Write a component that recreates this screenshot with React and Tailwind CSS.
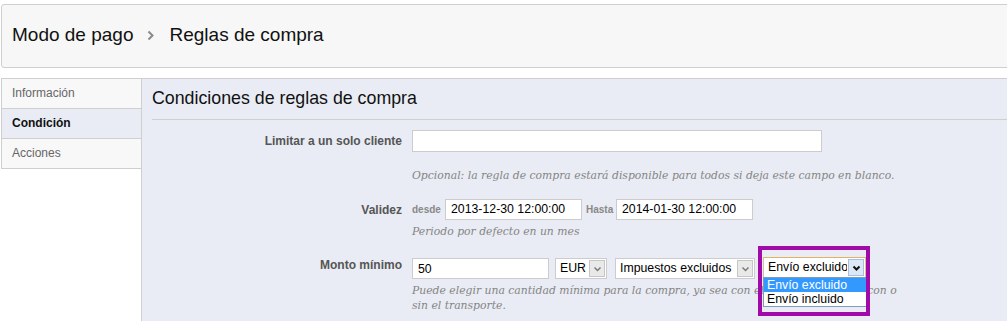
import React from "react";

const sans = { fontFamily: '"Liberation Sans", Arial, sans-serif' };
const serif = { fontFamily: '"DejaVu Serif", Georgia, serif' };

function Chevron({ color = "#777", bold = false }) {
  return (
    <svg width="9" height="6" viewBox="0 0 9 6">
      <polyline
        points="1.5,1.5 4.5,4.5 7.5,1.5"
        fill="none"
        stroke={color}
        strokeWidth={bold ? 2 : 1.5}
      />
    </svg>
  );
}

function Select({ text, width, focused = false }) {
  return (
    <div
      className={
        "relative flex h-[21px] items-stretch bg-white border " +
        (focused ? "border-[#d9c29a] border-t-[#e2b260]" : "border-[#cccccc]")
      }
      style={{ width }}
    >
      <div className="flex min-w-0 flex-1 items-center overflow-hidden whitespace-nowrap pl-[4px] text-[12.3px] text-black">
        {text}
      </div>
      <div
        className={
          "m-[1px] flex w-[16px] shrink-0 items-center justify-center border " +
          (focused ? "border-[#a9c0dc] bg-[#dde8f6]" : "border-[#c6c6c6] bg-[#e9e9e9]")
        }
      >
        <Chevron color={focused ? "#111" : "#7a7a7a"} bold={focused} />
      </div>
    </div>
  );
}

export default function App() {
  return (
    <div className="h-[321px] w-[1007px] overflow-hidden bg-white pl-[1px] pt-[4px]" style={sans}>
      {/* Header */}
      <div className="flex h-[64px] w-[1020px] items-center rounded-[3px] border border-[#cfcfcf] bg-[#f7f7f7] pl-[10px] pb-[2px]">
        <span className="text-[19px] text-[#111]">Modo de pago</span>
        <span className="ml-[13px] mr-[16px] flex items-center">
          <svg width="7" height="11" viewBox="0 0 7 11">
            <polyline points="1.5,1.5 5.5,5.5 1.5,9.5" fill="none" stroke="#8a8a8a" strokeWidth="2" />
          </svg>
        </span>
        <span className="text-[19px] text-[#111]">Reglas de compra</span>
      </div>

      {/* Body */}
      <div className="mt-[10px] flex">
        {/* Tabs */}
        <div className="w-[140px] shrink-0">
          <div className="border-l border-t border-[#cfcfcf]">
            <div className="flex h-[30px] items-center border-b border-[#cfcfcf] bg-[#f8f8f8] pl-[10px] pb-[1px] text-[12px] text-[#666]">
              Información
            </div>
            <div className="flex h-[30px] items-center border-b border-[#cfcfcf] bg-[#e9ecf4] pl-[10px] pb-[1px] text-[12px] font-bold text-[#111]">
              Condición
            </div>
            <div className="flex h-[30px] items-center border-b border-[#cfcfcf] bg-[#f8f8f8] pl-[10px] pb-[1px] text-[12px] text-[#666]">
              Acciones
            </div>
          </div>
        </div>

        {/* Panel */}
        <div className="h-[260px] w-[900px] shrink-0 border-l border-t border-[#cfcfcf] bg-[#e9ecf4]">
          <div className="ml-[10px] flex h-[41px] items-center border-b border-[#cfcfcf] pb-[2px] text-[17.8px] text-[#111]">
            Condiciones de reglas de compra
          </div>

          {/* Row 1 */}
          <div className="mt-[10px] flex items-center">
            <div className="w-[270px] pr-[10px] text-right text-[12px] font-bold text-[#555]">
              Limitar a un solo cliente
            </div>
            <div className="h-[22px] w-[410px] border border-[#cccccc] bg-white" />
          </div>
          <div
            className="ml-[270px] mt-[16px] whitespace-nowrap text-[10.8px] italic leading-[15px] text-[#858585]"
            style={serif}
          >
            Opcional: la regla de compra estará disponible para todos si deja este campo en blanco.
          </div>

          {/* Row 2 */}
          <div className="mt-[16px] flex items-center">
            <div className="w-[270px] pr-[10px] text-right text-[12px] font-bold text-[#555]">Validez</div>
            <span className="w-[33px] text-[10px] font-bold text-[#888]">desde</span>
            <div className="flex h-[21px] w-[137px] items-center whitespace-nowrap border border-[#cccccc] bg-white pl-[5px] text-[12.3px] text-black">
              2013-12-30 12:00:00
            </div>
            <span className="w-[34px] pl-[4px] text-[10px] font-bold text-[#888]">Hasta</span>
            <div className="flex h-[21px] w-[137px] items-center whitespace-nowrap border border-[#cccccc] bg-white pl-[5px] text-[12.3px] text-black">
              2014-01-30 12:00:00
            </div>
          </div>
          <div
            className="ml-[270px] mt-[4px] whitespace-nowrap text-[10.8px] italic leading-[15px] text-[#858585]"
            style={serif}
          >
            Periodo por defecto en un mes
          </div>

          {/* Row 3 */}
          <div className="mt-[19px] flex items-start">
            <div className="w-[270px] pr-[10px] text-right text-[12px] font-bold leading-[14px] text-[#555]">
              Monto mínimo
            </div>
            <div className="flex h-[21px] w-[137px] items-center border border-[#cccccc] bg-white pl-[5px] pt-[2px] text-[12.3px] text-black">
              50
            </div>
            <div className="ml-[6px]">
              <Select text="EUR" width={52} />
            </div>
            <div className="ml-[8px]">
              <Select text="Impuestos excluidos" width={140} />
            </div>
            <div className="relative ml-[8px] -mt-[1px]">
              <Select text="Envío excluido" width={103} focused />
              {/* Open dropdown list */}
              <div className="absolute left-0 top-[20px] z-10 w-[106px] border border-[#7f9db9] bg-white text-[12.3px] leading-[14px] whitespace-nowrap">
                <div className="bg-[#3399ff] pl-[3px] text-white">Envío excluido</div>
                <div className="pl-[3px] text-black">Envío incluido</div>
              </div>
              {/* Highlight frame */}
              <div className="pointer-events-none absolute left-[-5px] top-[-11px] z-20 h-[70px] w-[112px] border-[4px] border-[#a00aa8]" />
            </div>
          </div>
          <div
            className="ml-[270px] mt-[4px] whitespace-nowrap text-[10.8px] italic leading-[15px] text-[#858585]"
            style={serif}
          >
            Puede elegir una cantidad mínima para la compra, ya sea con el IVA incluido o no, con o
            <br />
            sin el transporte.
          </div>
        </div>
      </div>
    </div>
  );
}
